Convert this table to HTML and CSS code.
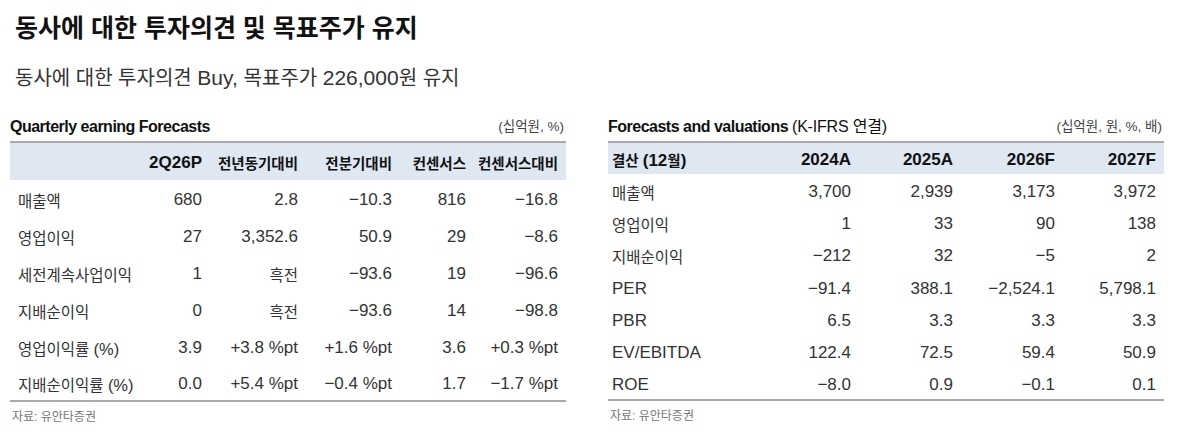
FILE: index.html
```html
<!DOCTYPE html>
<html lang="ko">
<head>
<meta charset="utf-8">
<title>동사에 대한 투자의견 및 목표주가 유지</title>
<link rel="stylesheet" href="styles.css">
</head>
<body>
<div class="page">
  <h1 class="title">동사에 대한 투자의견 및 목표주가 유지</h1>
  <p class="subtitle">동사에 대한 투자의견 <span class="lat">Buy, </span>목표주가 <span class="lat">226,000</span>원 유지</p>

  <div class="panels">
    <section class="panel panel-left">
      <div class="panel-head">
        <span class="panel-title">Quarterly earning Forecasts</span>
        <span class="unit">(십억원, %)</span>
      </div>
      <table class="tbl tbl-q">
        <colgroup>
          <col class="c-q1"><col class="c-q2"><col class="c-q3"><col class="c-q4"><col class="c-q5"><col class="c-q6">
        </colgroup>
        <thead>
          <tr><th></th><th>2Q26P</th><th class="ko">전년동기대비</th><th class="ko">전분기대비</th><th class="ko">컨센서스</th><th class="ko">컨센서스대비</th></tr>
        </thead>
        <tbody>
          <tr><td class="ko">매출액</td><td>680</td><td>2.8</td><td>−10.3</td><td>816</td><td>−16.8</td></tr>
          <tr><td class="ko">영업이익</td><td>27</td><td>3,352.6</td><td>50.9</td><td>29</td><td>−8.6</td></tr>
          <tr><td class="ko">세전계속사업이익</td><td>1</td><td class="ko">흑전</td><td>−93.6</td><td>19</td><td>−96.6</td></tr>
          <tr><td class="ko">지배순이익</td><td>0</td><td class="ko">흑전</td><td>−93.6</td><td>14</td><td>−98.8</td></tr>
          <tr><td class="ko">영업이익률 <span class="lat">(%)</span></td><td>3.9</td><td>+3.8 %pt</td><td>+1.6 %pt</td><td>3.6</td><td>+0.3 %pt</td></tr>
          <tr><td class="ko">지배순이익률 <span class="lat">(%)</span></td><td>0.0</td><td>+5.4 %pt</td><td>−0.4 %pt</td><td>1.7</td><td>−1.7 %pt</td></tr>
        </tbody>
      </table>
      <p class="source">자료: 유안타증권</p>
    </section>

    <section class="panel panel-right">
      <div class="panel-head">
        <span class="panel-title">Forecasts and valuations <span class="panel-title-sub">(K-IFRS 연결)</span></span>
        <span class="unit">(십억원, 원, %, 배)</span>
      </div>
      <table class="tbl tbl-v">
        <colgroup>
          <col class="c-v1"><col class="c-v2"><col class="c-v2"><col class="c-v2"><col class="c-v5">
        </colgroup>
        <thead>
          <tr><th class="ko">결산 <span class="lat">(12</span>월<span class="lat">)</span></th><th>2024A</th><th>2025A</th><th>2026F</th><th>2027F</th></tr>
        </thead>
        <tbody>
          <tr><td class="ko">매출액</td><td>3,700</td><td>2,939</td><td>3,173</td><td>3,972</td></tr>
          <tr><td class="ko">영업이익</td><td>1</td><td>33</td><td>90</td><td>138</td></tr>
          <tr><td class="ko">지배순이익</td><td>−212</td><td>32</td><td>−5</td><td>2</td></tr>
          <tr><td>PER</td><td>−91.4</td><td>388.1</td><td>−2,524.1</td><td>5,798.1</td></tr>
          <tr><td>PBR</td><td>6.5</td><td>3.3</td><td>3.3</td><td>3.3</td></tr>
          <tr><td>EV/EBITDA</td><td>122.4</td><td>72.5</td><td>59.4</td><td>50.9</td></tr>
          <tr><td>ROE</td><td>−8.0</td><td>0.9</td><td>−0.1</td><td>0.1</td></tr>
        </tbody>
      </table>
      <p class="source">자료: 유안타증권</p>
    </section>
  </div>
</div>
</body>
</html>
```

FILE: styles.css
```css
* { box-sizing: border-box; }

html, body {
  margin: 0;
  padding: 0;
  background: #ffffff;
}

body {
  font-family: "Liberation Sans", "Noto Sans CJK KR", sans-serif;
  color: #333333;
}

.page {
  width: 1200px;
  height: 441px;
  overflow: hidden;
}

.title {
  margin: 11px 0 0 0;
  padding-left: 15px;
  font-size: 25px;
  line-height: 34px;
  font-weight: 700;
  color: #111111;
}

.subtitle {
  margin: 20px 0 0 0;
  padding-left: 15px;
  font-size: 20px;
  line-height: 26px;
  font-weight: 400;
  color: #333333;
}

.subtitle .lat {
  font-size: 21px;
}

.panels {
  display: flex;
  gap: 42px;
  margin-top: 26px;
  padding-left: 10px;
}

.panel {
  width: 556px;
}

.panel-head {
  height: 24px;
  display: flex;
  justify-content: space-between;
  align-items: flex-start;
  line-height: 20px;
}

.panel-title {
  font-size: 16px;
  font-weight: 700;
  color: #111111;
  letter-spacing: -0.5px;
}

.panel-title-sub {
  font-size: 16px;
  font-weight: 400;
  letter-spacing: -0.2px;
}

.unit {
  font-size: 13.5px;
  color: #444444;
  padding-right: 2px;
}

.tbl {
  width: 556px;
  border-collapse: collapse;
  table-layout: fixed;
  border-top: 2px solid #a9a9a9;
  border-bottom: 2px solid #a9a9a9;
  font-size: 17px;
}

.tbl th {
  background: #dfe7f3;
  font-weight: 700;
  color: #111111;
  text-align: right;
  padding: 2px 8px 0 0;
  white-space: nowrap;
}

.tbl th.ko {
  font-size: 14.5px;
}

.tbl th .lat {
  font-size: 17px;
}

.tbl td {
  text-align: right;
  padding: 4px 8px 0 0;
  white-space: nowrap;
  color: #333333;
}

.tbl td.ko {
  font-size: 15.5px;
}

.tbl td .lat {
  font-size: 16.5px;
}

.tbl td:first-child,
.tbl th:first-child {
  text-align: left;
}

.tbl-q th { height: 38px; }
.tbl-q td { height: 36.8px; }
.tbl-q td:first-child { padding-left: 8px; }

.c-q1 { width: 120px; }
.c-q2 { width: 80px; }
.c-q3 { width: 96px; }
.c-q4 { width: 94px; }
.c-q5 { width: 74px; }
.c-q6 { width: 92px; }

.tbl-v th { height: 32px; }
.tbl-v td { height: 32.3px; padding-top: 3px; }
.tbl-v td:first-child,
.tbl-v th:first-child { padding-left: 4px; }

.c-v1 { width: 149px; }
.c-v2 { width: 102px; }
.c-v5 { width: 101px; }

.source {
  margin: 7px 0 0 2px;
  font-size: 12px;
  line-height: 16px;
  color: #777777;
}
```
